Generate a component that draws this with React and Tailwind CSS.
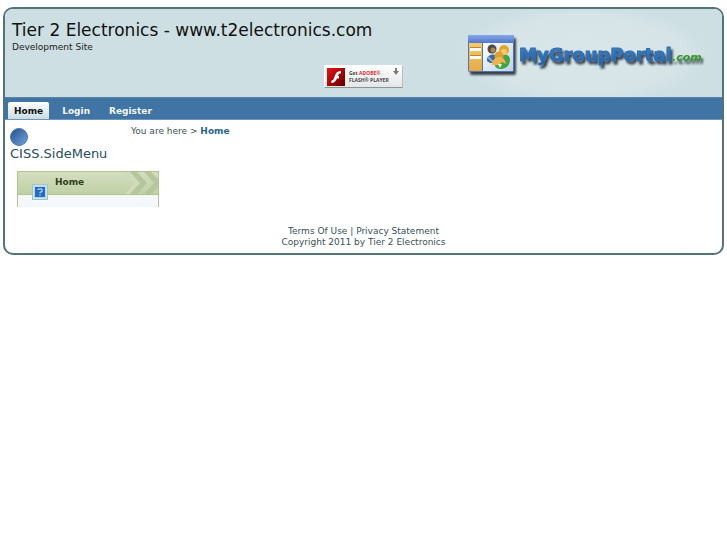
import React from 'react';

const navItems = ['Home', 'Login', 'Register'];

const FlashBadge = () => (
  <a
    href="#flash"
    aria-label="Get Adobe Flash Player"
    className="flex h-[23px] w-[79px] items-center border border-t-white border-r-[#b9bfc0] border-b-[#8d9495] border-l-white bg-gradient-to-b from-white to-[#e4e6e7] pl-[2px]"
  >
    <svg width="18" height="18" viewBox="0 0 18 18" className="shrink-0">
      <defs>
        <linearGradient id="flash" x1="0" y1="0" x2="1" y2="1">
          <stop offset="0" stopColor="#e01a18" />
          <stop offset="0.45" stopColor="#b00808" />
          <stop offset="1" stopColor="#5c0000" />
        </linearGradient>
      </defs>
      <rect width="18" height="18" fill="url(#flash)" />
      <path
        d="M14 3C9.800 3 8.700 5.500 7.700 8.300 6.800 11 6.100 12.500 4.300 12.700V15c3.300-.2 4.700-2.200 5.600-4.600h2.100V8.100h-1.200c.6-1.600 1.500-2.700 3.200-2.800z"
        fill="#fff"
      />
    </svg>
    <span className="ml-[4px] block w-[44px] whitespace-nowrap font-['Open_Sans',sans-serif] text-[5px] leading-[7px] font-bold text-[#444]">
      Get <span className="text-[#e8262a]">ADOBE®</span>
      <br />
      FLASH® PLAYER
    </span>
    <svg width="6" height="7" viewBox="0 0 6 7" className="mt-[2px] shrink-0 self-start">
      <path d="M2 0h2v3h2L3 7 0 3h2z" fill="#777b7d" />
    </svg>
  </a>
);

const PortalLogo = () => (
  <svg width="273" height="88" viewBox="0 0 273 88" role="img" aria-label="MyGroupPortal.com" className="block shrink-0">
    <defs>
      <radialGradient id="glow">
        <stop offset="0" stopColor="#d9e6e9" />
        <stop offset="0.7" stopColor="#d6e4e8" />
        <stop offset="1" stopColor="#cddfe3" stopOpacity="0" />
      </radialGradient>
      <linearGradient id="word" x1="0" y1="0" x2="0" y2="1">
        <stop offset="0" stopColor="#4085c8" />
        <stop offset="1" stopColor="#2862a3" />
      </linearGradient>
      <linearGradient id="bar" x1="0" y1="0" x2="0" y2="1">
        <stop offset="0" stopColor="#85a6e8" />
        <stop offset="1" stopColor="#5278cc" />
      </linearGradient>
      <linearGradient id="side" x1="0" y1="0" x2="0" y2="1">
        <stop offset="0" stopColor="#f8cb6b" />
        <stop offset="1" stopColor="#e5a944" />
      </linearGradient>
      <linearGradient id="pane" x1="0" y1="0" x2="1" y2="1">
        <stop offset="0" stopColor="#fff" />
        <stop offset="1" stopColor="#bfd3e5" />
      </linearGradient>
      <filter id="drop" x="-10%" y="-20%" width="120%" height="150%">
        <feDropShadow dx="2" dy="3" stdDeviation="1" floodColor="#101d26" floodOpacity="0.8" />
      </filter>
    </defs>
    <ellipse cx="134" cy="46" rx="140" ry="56" fill="url(#glow)" />

    {/* window with the people in it */}
    <g filter="url(#drop)">
      <rect x="19" y="26" width="46" height="37" rx="2" fill="#4d73b7" />
      <path d="M19 28q0-2 2-2h42q2 0 2 2v6H19z" fill="url(#bar)" />
      <rect x="20" y="34" width="13" height="28" fill="url(#side)" />
      <rect x="34" y="34" width="30" height="28" fill="url(#pane)" />
      <path d="M21 39h11v3H21zM21 47h11v3H21z" fill="#fff" />
      <path d="M21 38.500h11M21 46.500h11" stroke="#b68734" />
    </g>
    <circle cx="43" cy="40" r="4.500" fill="#4c4a42" />
    <circle cx="44" cy="41" r="2.500" fill="#a98555" />
    <path d="M38 52c-1-8 11-9 12-1l-3 3h-6z" fill="#3f689b" />
    <path d="M39 48l5 5" stroke="#8fb0d3" strokeWidth="2" />
    <path d="M46 56c1-12 15-14 15-5 0 5-4 9-9 9-4 0-6-2-6-4z" fill="#43a34a" />
    <circle cx="55" cy="41" r="5" fill="#e3a626" />
    <circle cx="55" cy="43" r="3" fill="#f4cd70" />
    <circle cx="50" cy="47" r="4.500" fill="#dba035" />
    <path d="M43 56c0-10 13-11 14-1l-4-2-3 3z" fill="#edb44c" />
    <path d="M49 55l2 4 2-4" fill="#e9f3e5" />

    <g fontFamily="'DejaVu Sans', sans-serif" fontWeight="700" strokeLinejoin="round" filter="url(#drop)">
      <text x="70" y="52" fontSize="18" fill="url(#word)" stroke="#2f6cad" strokeWidth="1">
        MyGroupPortal
      </text>
      <text x="223" y="52" fontSize="11" fontStyle="italic" fill="#35962a">
        .com
      </text>
    </g>
  </svg>
);

const SideMenu = () => (
  <div className="relative mt-[9px] ml-[7px] h-[36px] w-[142px] border-x border-[#b2c48e] bg-[#f4f8fc]">
    <div className="relative h-[24px] border-y border-[#b2c48e] bg-gradient-to-b from-[#d3dec0] to-[#c1d0a5]">
      <svg width="34" height="22" viewBox="0 0 34 22" className="absolute right-0 top-0">
        <path d="M0 0h9l10 11L9 22H1l9-11z" fill="#d0dbbc" />
        <path d="M6 0h7l10 11-10 11H6l10-11zM20 0h7l7 7v8l-7 7h-7l10-11z" fill="#b5c69b" />
      </svg>
      <a href="#home" className="relative block pl-[37px] leading-[21px] font-bold text-[#2f3e1b]">
        Home
      </a>
    </div>
    <svg width="16" height="16" viewBox="0 0 16 16" className="absolute top-[13px] left-[14px]">
      <rect x="0.500" y="0.500" width="15" height="15" fill="#d3e3dc" stroke="#9bc5d0" />
      <rect x="2.500" y="2.500" width="11" height="11" fill="#eff7fd" stroke="#b8d6ed" />
      <rect x="3" y="3" width="10" height="10" fill="#226bbd" />
      <path d="M6 6V5h4v3H8v1M8 10v1.500" fill="none" stroke="#d4e8fb" />
    </svg>
  </div>
);

const App = () => {
  return (
    <div className="px-[3px] pt-[7px] font-['DejaVu_Sans',sans-serif] text-[9px] leading-[12px] text-[#395257]">
      <div className="overflow-hidden rounded-[10px] border-2 border-[#527479]">
        <header className="flex h-[88px] justify-between bg-[#cddfe3]">
          <div className="min-w-0 flex-1 pt-[10px] pl-[7px]">
            <h1 className="text-[17px] leading-[22px] whitespace-nowrap text-[#111]">
              Tier 2 Electronics - www.t2electronics.com
            </h1>
            <p className="text-[#222]">Development Site</p>
            <div className="mt-[12px] flex justify-end pr-[46px]">
              <FlashBadge />
            </div>
          </div>
          <PortalLogo />
        </header>

        <nav className="flex h-[23px] items-end border-y border-t-[#5b85a6] border-b-[#6f96b6] bg-[#3f74a5] pl-[3px] font-bold">
          {navItems.map((item) => (
            <a
              key={item}
              href={`#${item.toLowerCase()}`}
              className={
                item === 'Home'
                  ? 'mr-[7px] rounded-t-[2px] bg-gradient-to-b from-white to-[#c9dce1] px-[6px] pt-[3px] pb-[2px] text-[#111]'
                  : 'mr-[7px] px-[6px] pt-[3px] pb-[2px] text-[#f3f7fa]'
              }
            >
              {item}
            </a>
          ))}
        </nav>

        <main className="flex min-h-[87px] pl-[5px]">
          <aside className="w-[121px] shrink-0 pt-[8px]">
            <svg width="18" height="18" viewBox="0 0 18 18" className="block">
              <defs>
                <linearGradient id="ball" x1="0" y1="0" x2="1" y2="1">
                  <stop offset="0" stopColor="#244f8d" />
                  <stop offset="1" stopColor="#73a5dc" />
                </linearGradient>
              </defs>
              <circle cx="9" cy="9" r="8.500" fill="url(#ball)" stroke="#4d78ab" />
            </svg>
            <h2 className="text-[13px] leading-[16px] text-[#264d60]">CISS.SideMenu</h2>
            <SideMenu />
          </aside>
          <p className="pt-[5px]">
            You are here &gt;{' '}
            <a href="#home" className="font-bold text-[#28658a]">
              Home
            </a>
          </p>
        </main>

        <footer className="pt-[19px] pb-[5px] text-center leading-[11px]">
          <p>
            <a href="#terms">Terms Of Use</a> | <a href="#privacy">Privacy Statement</a>
          </p>
          <p>Copyright 2011 by Tier 2 Electronics</p>
        </footer>
      </div>
    </div>
  );
};

export default App;
